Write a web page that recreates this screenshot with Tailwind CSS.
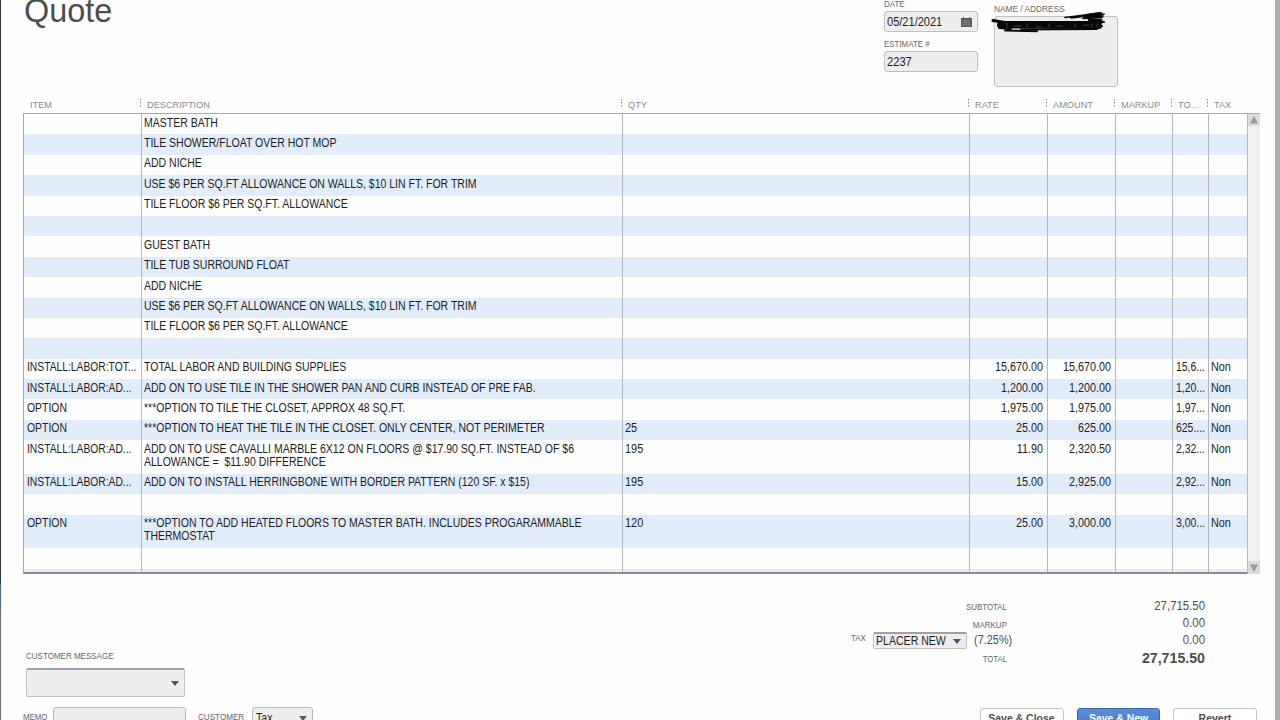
<!DOCTYPE html>
<html lang="en">
<head>
  <meta charset="UTF-8">
  <meta name="viewport" content="width=device-width, initial-scale=1.0">
  <title>Quote</title>
  <script src="https://cdn.jsdelivr.net/npm/@tailwindcss/browser@4"></script>
</head>
<body class="bg-[#fefefe] font-['Liberation_Sans',Arial,sans-serif] text-[#1c1c24]">
  <div class="flex w-[1280px] h-[720px] overflow-hidden">
    <!-- Window edge -->
    <div class="w-px shrink-0 flex flex-col">
      <div class="h-[584px] bg-[#2b3643]"></div>
      <div class="h-[24px] bg-[#4a6a88]"></div>
      <div class="flex-1 bg-[#6b6b6b]"></div>
    </div>

    <main class="flex-1 pl-[22px] min-w-0">
      <!-- Title and estimate fields -->
      <header class="flex h-[97px]">
        <h1 class="w-[861px] pl-px text-[32.4px] leading-[36px] -mt-[7px] text-[#4d4d4d]">Quote</h1>
        <div class="w-[94px] text-[12px]">
          <div class="text-[9px] leading-[10px] -mt-px text-[#666] origin-left scale-x-[.88]">DATE</div>
          <div class="mt-[2px] h-[21px] flex items-center justify-between rounded-[3px] border border-[#c0c0c0] bg-[#eee] pl-[2px] pr-[5px]">
            <span class="origin-left scale-x-[.92]">05/21/2021</span>
            <svg class="w-[11px] h-[10px]" viewBox="0 0 11 10">
              <path d="M0 1h2V0h1v1h5V0h1v1h2v9H0z" fill="#5c5c5c"/>
              <path d="M1 3.5h9M1 5.5h9M1 7.5h9M3.5 3v6M5.5 3v6M7.5 3v6" stroke="#8a8a8a" stroke-width=".5"/>
            </svg>
          </div>
          <div class="mt-[7px] text-[9px] leading-[10px] text-[#666] origin-left scale-x-[.88]">ESTIMATE #</div>
          <div class="mt-[2px] h-[21px] flex items-center rounded-[3px] border border-[#c0c0c0] bg-[#eee] pl-[2px]"><span class="origin-left scale-x-[.93]">2237</span></div>
        </div>
        <div class="ml-4 w-[124px] relative">
          <div class="mt-[4px] text-[9px] leading-[10px] text-[#666] whitespace-nowrap origin-left scale-x-[.925]">NAME / ADDRESS</div>
          <div class="mt-[2px] h-[71px] rounded-[3px] border border-[#c0c0c0] bg-[#eee]"></div>
          <svg class="absolute -left-[3px] top-[10px] w-[120px] h-[24px]" viewBox="0 0 120 24" fill="none" stroke="#080808" stroke-linecap="round">
            <path d="M2 10.500L14 12.500L110 12.500" stroke-width="3"/>
            <path d="M9 15L22 15.500L108 16" stroke-width="6"/>
            <path d="M8 18l12 1M14 20.500l32 .8M30 19.500l76-.5M104 10.500l9 1.500M102 18.500l9-2.500" stroke-width="1.900"/>
            <path d="M74 7.500l24-3 12-1.700M80 8l33-4M92 8.500l19-1M86 6l26 0" stroke-width="1.700"/>
            <path d="M96 5l12-1.500M94 7.500l16-1M98 10l12 0" stroke-width="2.500"/>
            <path d="M16 13v5M24 16h6M36 14v3M45 17h5M58 14v3M66 16h5M84 14v3M93 15h5M101 14v3M106 14v3" stroke="#666" stroke-width=".6"/>
          </svg>
        </div>
      </header>

      <!-- Column headings -->
      <div id="headings" class="grid grid-cols-[118px_481px_347px_78px_68px_57px_36px_40px] h-4 text-[9.5px] leading-[16px] text-[#8a8a8a]"></div>

      <div class="flex w-[1238px] h-[461px]">
        <div class="w-[1225px] h-[461px] border-t border-l border-[#a8a8a8] border-b-2 border-b-[#8b8f94] border-r border-r-[#b8b8b8] relative overflow-hidden">
          <div id="rows" class="text-[12px] leading-[13px]"></div>
          <!-- Column rules -->
          <div class="absolute inset-0 grid grid-cols-[118px_481px_347px_78px_68px_57px_36px]">
            <div class="border-r border-[#b4b7bb]"></div>
            <div class="border-r border-[#b4b7bb]"></div>
            <div class="border-r border-[#b4b7bb]"></div>
            <div class="border-r border-[#b4b7bb]"></div>
            <div class="border-r border-[#b4b7bb]"></div>
            <div class="border-r border-[#b4b7bb]"></div>
            <div class="border-r border-[#b4b7bb]"></div>
          </div>
        </div>
        <!-- Scrollbar -->
        <div class="w-[12px] flex flex-col justify-between bg-[#f0f0f0] border-t border-[#a8a8a8]">
          <svg class="w-[12px] h-[12px] bg-[#dcdcdc]" viewBox="0 0 12 12"><path d="M6 2L10 9.500H2z" fill="#999"/></svg>
          <svg class="w-[12px] h-[13px] bg-[#dcdcdc]" viewBox="0 0 12 13"><path d="M6 11L2 3.500H10z" fill="#999"/></svg>
        </div>
      </div>

      <!-- Footer -->
      <footer class="flex h-[146px] text-[#4d4d4d]">
        <div class="w-[828px] pt-[77px] pl-[3px] text-[9px] leading-[10px] text-[#666]">
          <div class="origin-left scale-x-[.89]">CUSTOMER MESSAGE</div>
          <div class="mt-[7px] w-[159px] h-[29px] flex items-center justify-end rounded-[2px] border border-[#c0c0c0] border-t-2 border-t-[#a0a0a0] bg-[#eee] pr-[5px]">
            <svg class="w-[8px] h-[5px]" viewBox="0 0 8 5"><path d="M0 0h8L4 5z" fill="#555"/></svg>
          </div>
          <div class="mt-[10px] flex">
            <span class="w-[27px] -ml-[3px] mr-[3px] mt-[5px] origin-left scale-x-[.87]">MEMO</span>
            <div class="w-[133px] h-[22px] rounded-[3px] border border-[#b8b8b8] bg-[#eee]"></div>
            <span class="ml-[12px] w-[54px] mt-[5px] origin-left scale-x-[.9]">CUSTOMER</span>
            <div class="w-[61px] h-[22px] flex items-center justify-between rounded-[3px] border border-[#b8b8b8] bg-[#eee] pl-[3px] pr-[5px] text-[12px] text-[#1c1c24]">
              <span class="origin-left scale-x-[.88]">Tax</span>
              <svg class="w-[8px] h-[5px]" viewBox="0 0 8 5"><path d="M0 0h8L4 5z" fill="#555"/></svg>
            </div>
          </div>
        </div>

        <div class="w-[406px] pt-[23px]">
          <div class="flex h-[18px] text-[12px] leading-[18px]">
            <span class="w-[156px] text-right text-[9px] leading-[20px] text-[#666] origin-right scale-x-[.88]">SUBTOTAL</span>
            <span class="w-[198px] text-right origin-right scale-x-[.95]">27,715.50</span>
          </div>
          <div class="flex h-[17px] text-[12px] leading-[17px]">
            <span class="w-[156px] text-right text-[9px] leading-[20px] text-[#666] origin-right scale-x-[.89]">MARKUP</span>
            <span class="w-[198px] text-right origin-right scale-x-[.95]">0.00</span>
          </div>
          <div class="flex h-[17px] text-[12px] leading-[17px]">
            <span class="w-[22px] text-[9px] leading-[12px] text-[#666] origin-left scale-x-[.88]">TAX</span>
            <div class="w-[94px] h-[17px] flex items-center rounded-[2px] border border-[#c0c0c0] border-t-2 border-t-[#a0a0a0] bg-[#eee] pl-[2px] text-[#1c1c24] whitespace-nowrap">
              <span class="w-[77px] origin-left scale-x-[.88]">PLACER NEW</span>
              <svg class="w-[8px] h-[5px]" viewBox="0 0 8 5"><path d="M0 0h8L4 5z" fill="#555"/></svg>
            </div>
            <span class="ml-[7px] w-[60px] origin-left scale-x-[.91]">(7.25%)</span>
            <span class="w-[171px] text-right origin-right scale-x-[.95]">0.00</span>
          </div>
          <div class="flex h-[19px] leading-[19px]">
            <span class="w-[156px] text-right text-[9px] leading-[20px] text-[#666] origin-right scale-x-[.86]">TOTAL</span>
            <span class="w-[198px] text-right text-[14.2px] font-bold">27,715.50</span>
          </div>
          <div class="mt-[40px] ml-[129px] flex gap-[13px] text-[11.5px] font-bold leading-[18px] text-center whitespace-nowrap">
            <div class="w-[84px] h-[24px] rounded-[3px] border border-[#c4c4c4] bg-white"><span class="inline-block scale-x-[.91]">Save &amp; Close</span></div>
            <div class="w-[84px] h-[24px] rounded-[3px] border border-[#3a66ad] bg-linear-to-b from-[#5b8dda] to-[#3f74c5] text-white"><span class="inline-block scale-x-[.91]">Save &amp; New</span></div>
            <div class="w-[84px] h-[24px] rounded-[3px] border border-[#c4c4c4] bg-white"><span class="inline-block scale-x-[.91]">Revert</span></div>
          </div>
        </div>
      </footer>
    </main>

    <div class="w-[5px] shrink-0 bg-[#b0b0b0]"></div>
  </div>

  <script>
    const headings = ['ITEM', 'DESCRIPTION', 'QTY', 'RATE', 'AMOUNT', 'MARKUP', 'TO...', 'TAX'];

    // height, item, description, qty, rate, amount, total
    const lines = [
      [20.4, '', 'MASTER BATH'],
      [20.4, '', 'TILE SHOWER/FLOAT OVER HOT MOP'],
      [20.4, '', 'ADD NICHE'],
      [20.4, '', 'USE $6 PER SQ.FT ALLOWANCE ON WALLS, $10 LIN FT. FOR TRIM'],
      [20.4, '', 'TILE FLOOR $6 PER SQ.FT. ALLOWANCE'],
      [20.4, '', ''],
      [20.4, '', 'GUEST BATH'],
      [20.4, '', 'TILE TUB SURROUND FLOAT'],
      [20.4, '', 'ADD NICHE'],
      [20.4, '', 'USE $6 PER SQ.FT ALLOWANCE ON WALLS, $10 LIN FT. FOR TRIM'],
      [20.4, '', 'TILE FLOOR $6 PER SQ.FT. ALLOWANCE'],
      [20.4, '', ''],
      [20.4, 'INSTALL:LABOR:TOT...', 'TOTAL LABOR AND BUILDING SUPPLIES', '', '15,670.00', '15,670.00', '15,6...'],
      [20.4, 'INSTALL:LABOR:AD...', 'ADD ON TO USE TILE IN THE SHOWER PAN AND CURB INSTEAD OF PRE FAB.', '', '1,200.00', '1,200.00', '1,20...'],
      [20.4, 'OPTION', '***OPTION TO TILE THE CLOSET, APPROX 48 SQ.FT.', '', '1,975.00', '1,975.00', '1,97...'],
      [20.4, 'OPTION', '***OPTION TO HEAT THE TILE IN THE CLOSET. ONLY CENTER, NOT PERIMETER', '25', '25.00', '625.00', '625....'],
      [33.7, 'INSTALL:LABOR:AD...', 'ADD ON TO USE CAVALLI MARBLE 6X12 ON FLOORS @ $17.90 SQ.FT. INSTEAD OF $6\nALLOWANCE =  $11.90 DIFFERENCE', '195', '11.90', '2,320.50', '2,32...'],
      [20.4, 'INSTALL:LABOR:AD...', 'ADD ON TO INSTALL HERRINGBONE WITH BORDER PATTERN (120 SF. x $15)', '195', '15.00', '2,925.00', '2,92...'],
      [20.4, '', ''],
      [33.7, 'OPTION', '***OPTION TO ADD HEATED FLOORS TO MASTER BATH. INCLUDES PROGARAMMABLE\nTHERMOSTAT', '120', '25.00', '3,000.00', '3,00...'],
      [20.4, '', ''],
      [20.4, '', '']
    ];

    document.getElementById('headings').innerHTML = headings.map((name, i) => `
      <div class="flex pl-[6px] whitespace-nowrap">
        ${i ? `<svg class="-ml-[7px] mr-[6px] mt-[2px] w-px h-[9px] shrink-0" viewBox="0 0 1 9"><path d="M.5 0v9" stroke="#888" stroke-dasharray="1.500 1.500"/></svg>` : '<span class="w-px"></span>'}
        <span class="origin-left scale-x-[.97]">${name}</span>
      </div>`).join('');

    document.getElementById('rows').innerHTML = lines.map(([height, item, text, qty = '', rate = '', amount = '', total = ''], i) => `
      <div class="grid grid-cols-[118px_481px_347px_78px_68px_57px_36px_38px] pt-[2.500px] whitespace-pre ${i % 2 ? 'bg-[#e2edfc]' : 'bg-[#fefefe]'}" style="height: ${height}px">
        <div class="ml-[2.500px] origin-left ${item === 'OPTION' ? 'scale-x-[.87]' : 'scale-x-[.857]'}">${item}</div>
        <div class="ml-[2px] origin-left scale-x-[.875]">${text}</div>
        <div class="ml-[2px] origin-left scale-x-[.91]">${qty}</div>
        <div class="mr-[5px] text-right origin-right scale-x-[.9]">${rate}</div>
        <div class="mr-[5px] text-right origin-right scale-x-[.9]">${amount}</div>
        <div></div>
        <div class="ml-[3px] origin-left scale-x-[.87]">${total}</div>
        <div class="ml-[2px] origin-left scale-x-[.9]">${total ? 'Non' : ''}</div>
      </div>`).join('');
  </script>
</body>
</html>
